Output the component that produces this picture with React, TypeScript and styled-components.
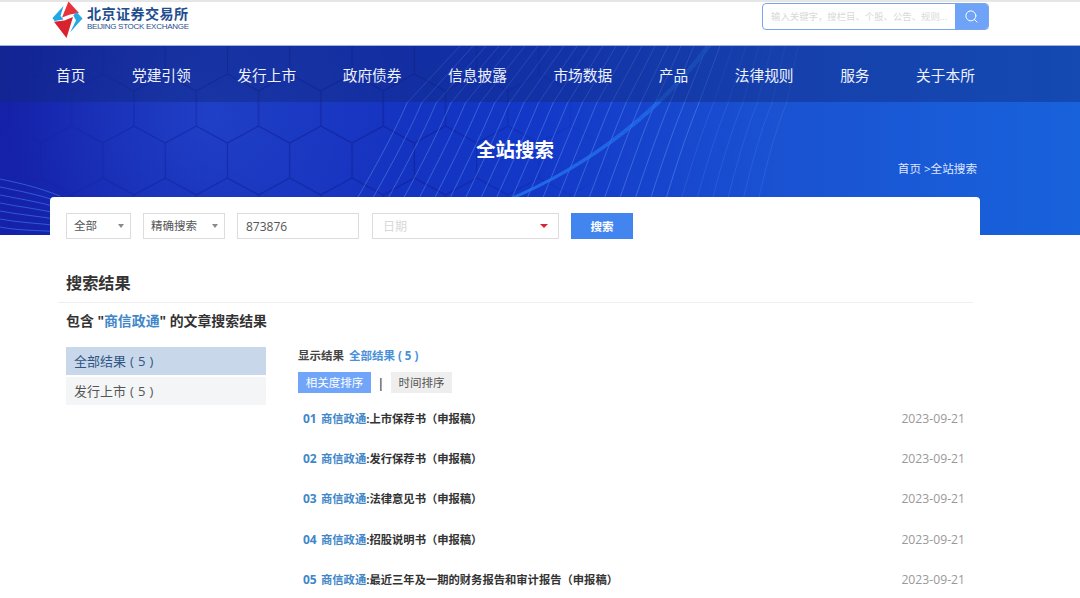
import React from "react"
import styled, { createGlobalStyle } from "styled-components"
import { Search } from "lucide-react"

const FONT = `"Open Sans", "Noto Sans CJK SC", sans-serif`

const NAV = ["首页", "党建引领", "发行上市", "政府债券", "信息披露", "市场数据", "产品", "法律规则", "服务", "关于本所"]
const RESULTS = [
  { no: "01", title: "上市保荐书（申报稿）" },
  { no: "02", title: "发行保荐书（申报稿）" },
  { no: "03", title: "法律意见书（申报稿）" },
  { no: "04", title: "招股说明书（申报稿）" },
  { no: "05", title: "最近三年及一期的财务报告和审计报告（申报稿）" },
]

const GlobalStyle = createGlobalStyle`
  html, body {
    margin: 0;
    padding: 0;
    height: 598px;
    overflow: hidden;
    background: #fff;
    font-family: ${FONT};
  }
  * { box-sizing: border-box; }
`

const Logo = () => (
  <svg width="31" height="37" viewBox="0 0 30 37">
    <path d="M0 17 L11 5 L8 15 L11 18.5 L2 20 Z" fill="#1ea8e4" />
    <path d="M16 0.5 L26.5 12 L17.5 13.5 L9.5 16.5 Z" fill="#e8323c" />
    <path d="M1.5 20.8 L12 19.5 L20.5 16 L14 37 Z" fill="#d8222e" />
    <path d="M24 11 L30 17.5 L17.5 31.5 L23.5 19.5 L20.8 14.5 Z" fill="#28a9e2" />
  </svg>
)

const HeroArt = () => {
  const fan = Array.from({ length: 27 }, (_, i) => i)
  const arc = [0, 1, 2, 3, 4, 5]
  const wave = [0, 1, 2, 3, 4, 5, 6]
  return (
    <S.Art width="1080" height="190" viewBox="0 0 1080 190">
      <defs>
        <pattern id="hex" width="62.3" height="104" patternUnits="userSpaceOnUse" patternTransform="translate(9.4 28)">
          <path d="M31.15 0 L62.3 17 V52 L31.15 69 L0 52 V17 Z M31.15 69 V104" fill="none" stroke="#10209a" strokeWidth="1.2" />
        </pattern>
        <linearGradient id="fade" x1="0" x2="1" y1="0" y2="0">
          <stop offset="0" stopColor="#fff" stopOpacity=".05" />
          <stop offset=".14" stopColor="#fff" stopOpacity=".55" />
          <stop offset=".4" stopColor="#fff" stopOpacity=".75" />
          <stop offset=".56" stopColor="#fff" stopOpacity="0" />
        </linearGradient>
        <radialGradient id="glow" cx="210" cy="70" r="200" gradientUnits="userSpaceOnUse">
          <stop offset="0" stopColor="#2a55d8" stopOpacity=".5" />
          <stop offset="1" stopColor="#2a55d8" stopOpacity="0" />
        </radialGradient>
        <mask id="hexMask">
          <rect width="1080" height="190" fill="url(#fade)" />
        </mask>
      </defs>
      <rect width="1080" height="190" fill="url(#glow)" />
      <rect width="1080" height="190" fill="url(#hex)" mask="url(#hexMask)" />
      {fan.map((i) => {
        const bottom = 335 + i * 16
        const mid = 407 + i * 14.6
        const top = 460 + i * 13
        return (
          <path
            key={i}
            d={`M${bottom} 190 Q${mid - 18} 100 ${mid} 57 L${top} 0`}
            fill="none"
            stroke="#6aa2f8"
            strokeOpacity={i > 20 ? 0.2 : 0.45}
            strokeWidth=".9"
          />
        )
      })}
      {arc.map((i) => (
        <path
          key={i}
          d={`M${490 + i} 160 C${570 + i} 130 ${650 + i} 75 ${706 + i} 0`}
          fill="none"
          stroke="#2472ee"
          strokeOpacity=".7"
          strokeWidth="1"
        />
      ))}
      {wave.map((i) => (
        <path
          key={i}
          d={`M0 ${133 + i * 8} C20 ${137 + i * 8} 40 ${142 + i * 7} 60 ${150 + i * 6}`}
          fill="none"
          stroke="#3a74ee"
          strokeOpacity=".75"
          strokeWidth=".9"
        />
      ))}
    </S.Art>
  )
}

export default function App() {
  return (
    <S.Page>
      <GlobalStyle />
      <S.Header>
        <S.Brand>
          <Logo />
          <S.BrandText>
            <S.BrandCn>北京证券交易所</S.BrandCn>
            <S.BrandEn>BEIJING STOCK EXCHANGE</S.BrandEn>
          </S.BrandText>
        </S.Brand>
        <S.TopSearch>
          <S.TopInput>输入关键字，搜栏目、个股、公告、规则...</S.TopInput>
          <S.TopButton>
            <Search size={15} strokeWidth={1.6} color="#fff" />
          </S.TopButton>
        </S.TopSearch>
      </S.Header>

      <S.Hero>
        <HeroArt />
        <S.Nav>
          {NAV.map((n) => (
            <S.NavItem key={n}>{n}</S.NavItem>
          ))}
        </S.Nav>
        <S.HeroBody>
          <S.HeroTitle>全站搜索</S.HeroTitle>
          <S.Crumb>首页 &gt;全站搜索</S.Crumb>
        </S.HeroBody>
      </S.Hero>

      <S.FilterCard>
        <S.Select $w={65}>
          全部
          <S.Caret />
        </S.Select>
        <S.Select $w={82}>
          精确搜索
          <S.Caret />
        </S.Select>
        <S.Field $w={122}>873876</S.Field>
        <S.Field $w={187} $muted>
          日期
          <S.Caret $red />
        </S.Field>
        <S.SearchButton>搜索</S.SearchButton>
      </S.FilterCard>

      <S.Content>
        <S.Heading>搜索结果</S.Heading>
        <S.Summary>
          包含 "<S.Key>商信政通</S.Key>" 的文章搜索结果
        </S.Summary>
        <S.Columns>
          <S.Side>
            <S.SideItem $active>全部结果 ( 5 )</S.SideItem>
            <S.SideItem>发行上市 ( 5 )</S.SideItem>
          </S.Side>
          <S.Main>
            <S.ShowLine>
              显示结果<S.ShowValue>全部结果 ( 5 )</S.ShowValue>
            </S.ShowLine>
            <S.SortBar>
              <S.SortTab $active>相关度排序</S.SortTab>
              <S.SortSep>|</S.SortSep>
              <S.SortTab>时间排序</S.SortTab>
            </S.SortBar>
            <S.List>
              {RESULTS.map((r) => (
                <S.Row key={r.no}>
                  <S.RowTitle>
                    <S.RowNo>{r.no}</S.RowNo>
                    <S.Key>商信政通</S.Key>:{r.title}
                  </S.RowTitle>
                  <S.RowDate>2023-09-21</S.RowDate>
                </S.Row>
              ))}
            </S.List>
          </S.Main>
        </S.Columns>
      </S.Content>
    </S.Page>
  )
}

const S = {
  Page: styled.div`
    width: 1080px;
    height: 598px;
    overflow: hidden;
    color: #333;
  `,
  Header: styled.header`
    height: 45px;
    border-top: 2px solid #e6e6e6;
    padding: 0 91px 0 52px;
    display: flex;
    align-items: flex-start;
    justify-content: space-between;
    background: #fff;
  `,
  Brand: styled.div`
    display: flex;
    align-items: flex-start;
    gap: 4px;
    margin-top: -1px;
  `,
  BrandText: styled.div`
    display: flex;
    flex-direction: column;
    color: #1f4e8f;
    padding-top: 5px;
  `,
  BrandCn: styled.div`
    font-size: 14.1px;
    font-weight: 700;
    line-height: 16px;
    letter-spacing: 0.4px;
    white-space: nowrap;
  `,
  BrandEn: styled.div`
    font-family: "Liberation Sans", sans-serif;
    font-size: 8px;
    font-weight: 400;
    line-height: 9px;
    letter-spacing: -0.28px;
    white-space: nowrap;
  `,
  TopSearch: styled.div`
    width: 227px;
    height: 27px;
    margin-top: 1px;
    display: flex;
    border: 1px solid #7ba5ea;
    border-radius: 4px;
    overflow: hidden;
  `,
  TopInput: styled.div`
    flex: 1;
    min-width: 0;
    padding: 0 8px;
    font-size: 9.4px;
    line-height: 26px;
    color: #d8d8d8;
    white-space: nowrap;
    overflow: hidden;
  `,
  TopButton: styled.div`
    width: 33px;
    background: #6ea3f7;
    display: flex;
    align-items: center;
    justify-content: center;
  `,
  Hero: styled.section`
    position: relative;
    height: 190px;
    border-top: 1px solid #9fb2e2;
    background: linear-gradient(90deg, #1521a8 0%, #1530bc 30%, #1338c8 50%, #1a52d2 72%, #1862dc 100%);
    overflow: hidden;
  `,
  Art: styled.svg`
    position: absolute;
    inset: 0;
  `,
  Nav: styled.nav`
    position: relative;
    height: 56px;
    padding: 2px 105px 0 56px;
    display: flex;
    align-items: center;
    justify-content: space-between;
    background: rgba(16, 40, 120, 0.42);
  `,
  NavItem: styled.a`
    color: #eef2ff;
    font-size: 14.7px;
    line-height: 1;
  `,
  HeroBody: styled.div`
    position: relative;
    padding: 34px 103px 0 0;
    text-align: center;
  `,
  HeroTitle: styled.h1`
    margin: 0;
    padding-left: 53px;
    font-size: 19.5px;
    font-weight: 700;
    line-height: 28px;
    color: #fff;
  `,
  Crumb: styled.div`
    margin-top: -3px;
    text-align: right;
    font-size: 11.6px;
    line-height: 16px;
    color: #dfe7ff;
  `,
  FilterCard: styled.div`
    position: relative;
    width: 930px;
    height: 56px;
    margin: -38px 0 0 50px;
    padding: 16px 16px 0;
    display: flex;
    align-items: flex-start;
    gap: 12px;
    background: #fff;
    border-radius: 4px 4px 0 0;
  `,
  Select: styled.div<{ $w: number }>`
    position: relative;
    width: ${(p) => p.$w}px;
    height: 26px;
    padding-left: 7px;
    border: 1px solid #dcdcdc;
    font-size: 11.5px;
    line-height: 24px;
    color: #555;
  `,
  Caret: styled.i<{ $red?: boolean }>`
    position: absolute;
    top: 10px;
    right: ${(p) => (p.$red ? "10px" : "6px")};
    border-style: solid;
    border-width: ${(p) => (p.$red ? "4px 4.5px 0" : "4px 3px 0")};
    border-color: ${(p) => (p.$red ? "#d9232e" : "#8a8a8a")} transparent transparent;
  `,
  Field: styled.div<{ $w: number; $muted?: boolean }>`
    position: relative;
    width: ${(p) => p.$w}px;
    height: 26px;
    margin-left: ${(p) => (p.$muted ? "1px" : "0")};
    padding-left: ${(p) => (p.$muted ? "10px" : "8px")};
    border: 1px solid #dcdcdc;
    font-size: 12px;
    line-height: 25px;
    color: ${(p) => (p.$muted ? "#d8d8d8" : "#555")};
  `,
  SearchButton: styled.button`
    width: 62px;
    height: 26px;
    padding: 0;
    border: 0;
    background: #4285ee;
    color: #fff;
    font-family: ${FONT};
    font-size: 11.5px;
    font-weight: 700;
  `,
  Content: styled.main`
    width: 915px;
    margin-left: 58px;
  `,
  Heading: styled.h2`
    margin: 0;
    padding: 19px 0 8px 8px;
    border-bottom: 1px solid #eeeeee;
    font-size: 16.2px;
    font-weight: 700;
    line-height: 22px;
    color: #333;
  `,
  Summary: styled.div`
    margin: 9px 0 0 8px;
    font-size: 13.9px;
    font-weight: 700;
    line-height: 18px;
    color: #333;
  `,
  Key: styled.span`
    color: #3f87c9;
  `,
  Columns: styled.div`
    display: flex;
    margin: 17px 0 0 8px;
  `,
  Side: styled.aside`
    width: 200px;
    flex: none;
  `,
  SideItem: styled.div<{ $active?: boolean }>`
    height: 28px;
    margin-bottom: 2px;
    padding-left: 8px;
    background: ${(p) => (p.$active ? "#c8d8ea" : "#f4f5f7")};
    font-size: 13px;
    line-height: 29px;
    word-spacing: 0.7px;
    color: ${(p) => (p.$active ? "#2f5584" : "#555")};
  `,
  Main: styled.div`
    flex: 1;
    padding-left: 32px;
  `,
  ShowLine: styled.div`
    display: flex;
    gap: 5px;
    font-size: 11.5px;
    font-weight: 700;
    line-height: 18px;
    color: #444;
  `,
  ShowValue: styled.span`
    color: #4a90d9;
  `,
  SortBar: styled.div`
    display: flex;
    align-items: center;
    margin-top: 7px;
  `,
  SortTab: styled.div<{ $active?: boolean }>`
    height: 21px;
    padding: 0 7.7px;
    background: ${(p) => (p.$active ? "#70a5fa" : "#eeeeee")};
    color: ${(p) => (p.$active ? "#fff" : "#555")};
    font-size: 11.5px;
    line-height: 22px;
  `,
  SortSep: styled.span`
    width: 20px;
    text-align: center;
    font-size: 13px;
    font-weight: 600;
    color: #444;
  `,
  List: styled.div`
    margin-top: 5px;
  `,
  Row: styled.div`
    height: 40.4px;
    padding: 0 8px 0 5px;
    display: flex;
    align-items: center;
    justify-content: space-between;
  `,
  RowTitle: styled.div`
    font-size: 11.3px;
    font-weight: 700;
    color: #333;
  `,
  RowNo: styled.span`
    display: inline-block;
    width: 18px;
    font-size: 12px;
    color: #3f87c9;
  `,
  RowDate: styled.div`
    font-size: 12.2px;
    color: #999;
  `,
}
